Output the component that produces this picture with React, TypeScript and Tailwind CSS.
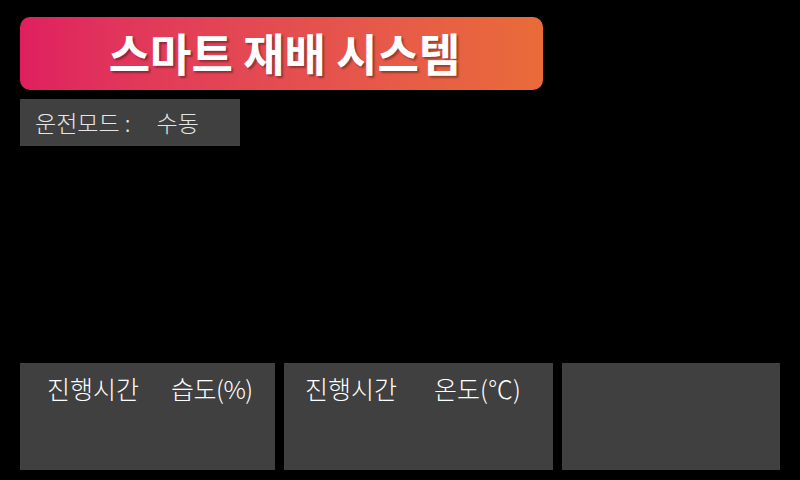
import React from 'react';

const KR = "font-['Noto_Sans_CJK_KR','Noto_Sans',sans-serif]";

const App = () => {
  return (
    <div className={`w-[800px] h-[480px] bg-black flex flex-col overflow-hidden ${KR}`}>
      {/* Title banner */}
      <div className="mt-[17px] ml-[20px] w-[523px] h-[73px] rounded-[10px] bg-gradient-to-r from-[#df1f60] to-[#e96b38] flex items-center justify-center pl-[6px] pb-[3px]">
        <span className="text-white text-[45px] font-bold leading-none [text-shadow:2px_2px_2px_rgba(0,0,0,0.35)]">
          스마트 재배 시스템
        </span>
      </div>

      {/* Mode */}
      <div className="mt-[9px] ml-[20px] w-[220px] h-[47px] bg-[#404040] flex items-center pl-[15px] text-[#e6e6e6] text-[23px] font-light leading-none">
        <span>운전모드&nbsp;:</span>
        <span className="ml-[26px]">수동</span>
      </div>

      {/* Bottom panels */}
      <div className="mt-auto mb-[10px] ml-[20px] flex gap-[9px] h-[107px]">
        <div className="w-[255px] bg-[#404040] flex items-start pt-[8px] pl-[27px] text-white text-[25px] font-light leading-[34px]">
          <span>진행시간</span>
          <span className="ml-[32px] tracking-[-0.5px]">습도(%)</span>
        </div>
        <div className="w-[269px] bg-[#404040] flex items-start pt-[8px] pl-[21px] text-white text-[25px] font-light leading-[34px]">
          <span>진행시간</span>
          <span className="ml-[37px]">온도(℃)</span>
        </div>
        <div className="w-[218px] bg-[#404040]" />
      </div>
    </div>
  );
};

export default App;
